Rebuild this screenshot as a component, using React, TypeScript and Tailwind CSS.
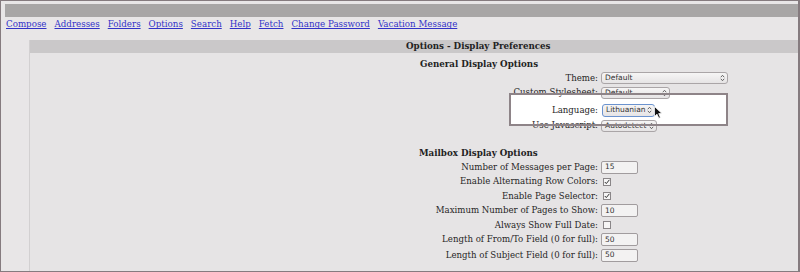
import React from "react";

const Arrows = () => (
  <svg width="5" height="8" viewBox="0 0 5 8" className="shrink-0">
    <path d="M0.8 3.2 L2.5 1.3 L4.2 3.2" fill="none" stroke="#555" strokeWidth="0.9" />
    <path d="M0.8 4.8 L2.5 6.7 L4.2 4.8" fill="none" stroke="#555" strokeWidth="0.9" />
  </svg>
);

const Select = ({ value, w, focus }: { value: string; w: string; focus?: boolean }) => (
  <div
    className={`${w} flex items-center justify-between rounded-[3px] border pl-[3px] pr-[2px] bg-gradient-to-b from-[#f6f5f5] to-[#e6e4e5] text-[7.5px] leading-none text-[#333] font-['DejaVu_Sans',sans-serif] ${
      focus ? "h-[13px] border-[#6b93cf]" : "h-[12px] border-[#aaa5a7]"
    }`}
  >
    <span className="whitespace-nowrap">{value}</span>
    <Arrows />
  </div>
);

const Input = ({ value }: { value: string }) => (
  <div className="w-[37px] h-[13px] flex items-center rounded-[2px] border border-[#a19c9e] bg-[#f3f2f2] pl-[3px] text-[7.5px] leading-none text-[#333] font-['DejaVu_Sans',sans-serif]">
    {value}
  </div>
);

const Check = ({ on }: { on?: boolean }) => (
  <div className="ml-[2px] w-[8px] h-[8px] border border-[#8a8688] bg-[#f6f5f5] flex items-center justify-center">
    {on && (
      <svg width="6" height="6" viewBox="0 0 6 6">
        <path d="M0.8 3 L2.3 4.6 L5.4 0.8" fill="none" stroke="#333" strokeWidth="1" />
      </svg>
    )}
  </div>
);

const Row = ({ label, h, children }: { label: string; h: string; children: React.ReactNode }) => (
  <div className={`flex items-center ${h} relative z-10`}>
    <div className="w-[571px] pr-[3px] text-right whitespace-nowrap">{label}</div>
    {children}
  </div>
);

const links = ["Compose", "Addresses", "Folders", "Options", "Search", "Help", "Fetch", "Change Password", "Vacation Message"];

export default function App() {
  return (
    <div className="w-[800px] h-[272px] overflow-hidden bg-[#e8e6e7] border-t border-l border-b border-r-2 border-[#857b7f] font-['DejaVu_Serif',serif] text-[8.6px] text-[#262626] relative">
      <div className="pl-[4px] pt-[3px]">
        <div className="h-[13px] bg-[#a8a6a6]" />
        <nav className="flex gap-[8px] pl-[1px] h-[12px] items-center mt-[2px] text-[8.7px]">
          {links.map((l) => (
            <a key={l} href="#" className="text-[#3232c8] underline decoration-[#3232c8] whitespace-nowrap">
              {l}
            </a>
          ))}
        </nav>
      </div>
      <div className="ml-[28px] mt-[9px] h-[300px] border-l border-[#d2d0d1] bg-[#e6e4e5] relative">
        <div className="h-[13px] bg-[#cac8c9] font-bold text-[8.7px] flex items-center pl-[376px] pt-[1px] text-[#222]">
          Options - Display Preferences
        </div>
        {/* highlight box fill */}
        <div className="absolute left-[479px] top-[53px] w-[219px] h-[33px] bg-white z-0" />
        <div className="absolute left-[479px] top-[53px] w-[219px] h-[33px] border-2 border-[#8e8488] z-20 pointer-events-none" />
        {/* cursor */}
        <svg className="absolute left-[624px] top-[66px] z-30" width="9" height="13" viewBox="0 0 9 13">
          <path d="M0.5 0.5 L0.5 10.5 L3 8.2 L4.8 12.2 L6.4 11.5 L4.7 7.6 L8 7.6 Z" fill="#111" stroke="#fff" strokeWidth="0.8" />
        </svg>
        <div className="pt-[4px]">
          <div className="h-[14px] flex items-center pl-[390px] pt-[1px] font-bold text-[8.7px] text-[#222]">General Display Options</div>
          <Row label="Theme:" h="h-[14px]">
            <Select value="Default" w="w-[127px]" />
          </Row>
          <Row label="Custom Stylesheet:" h="h-[15px]">
            <Select value="Default" w="w-[69px]" />
          </Row>
          <div className="h-[2px]" />
          <Row label="Language:" h="h-[16px]">
            <div className="ml-[1px]">
              <Select value="Lithuanian" w="w-[53px]" focus />
            </div>
          </Row>
          <Row label="Use Javascript:" h="h-[15px]">
            <Select value="Autodetect" w="w-[56px]" />
          </Row>
          <div className="h-[13px]" />
          <div className="h-[14px] flex items-center pl-[389px] pt-[1px] font-bold text-[8.7px] text-[#222]">Mailbox Display Options</div>
          <Row label="Number of Messages per Page:" h="h-[14px]">
            <Input value="15" />
          </Row>
          <Row label="Enable Alternating Row Colors:" h="h-[15px]">
            <Check on />
          </Row>
          <Row label="Enable Page Selector:" h="h-[14px]">
            <Check on />
          </Row>
          <Row label="Maximum Number of Pages to Show:" h="h-[15px]">
            <Input value="10" />
          </Row>
          <Row label="Always Show Full Date:" h="h-[14px]">
            <Check />
          </Row>
          <Row label="Length of From/To Field (0 for full):" h="h-[15px]">
            <Input value="50" />
          </Row>
          <Row label="Length of Subject Field (0 for full):" h="h-[16px]">
            <Input value="50" />
          </Row>
        </div>
      </div>
    </div>
  );
}
